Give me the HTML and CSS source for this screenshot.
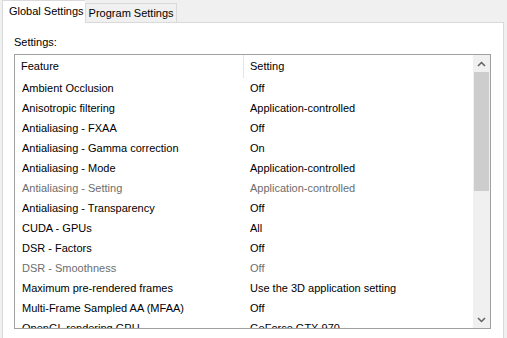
FILE: index.html
```html
<!DOCTYPE html>
<html lang="en">
<head>
    <meta charset="UTF-8">
    <title>Manage 3D Settings</title>
    <link rel="stylesheet" href="styles.css">
</head>
<body>

    <div class="tabs">
        <div class="tab active">Global Settings</div>
        <div class="tab">Program Settings</div>
    </div>

    <div class="panel">
        <div class="label">Settings:</div>

        <div class="listbox">
            <div class="list">
                <div class="header">
                    <div class="col feature">Feature</div>
                    <div class="col setting">Setting</div>
                </div>
                <div class="rows">
                    <div class="row"><span class="feature">Ambient Occlusion</span><span class="setting">Off</span></div>
                    <div class="row"><span class="feature">Anisotropic filtering</span><span class="setting">Application-controlled</span></div>
                    <div class="row"><span class="feature">Antialiasing - FXAA</span><span class="setting">Off</span></div>
                    <div class="row"><span class="feature">Antialiasing - Gamma correction</span><span class="setting">On</span></div>
                    <div class="row"><span class="feature">Antialiasing - Mode</span><span class="setting">Application-controlled</span></div>
                    <div class="row disabled"><span class="feature">Antialiasing - Setting</span><span class="setting">Application-controlled</span></div>
                    <div class="row"><span class="feature">Antialiasing - Transparency</span><span class="setting">Off</span></div>
                    <div class="row"><span class="feature">CUDA - GPUs</span><span class="setting">All</span></div>
                    <div class="row"><span class="feature">DSR - Factors</span><span class="setting">Off</span></div>
                    <div class="row disabled"><span class="feature">DSR - Smoothness</span><span class="setting">Off</span></div>
                    <div class="row"><span class="feature">Maximum pre-rendered frames</span><span class="setting">Use the 3D application setting</span></div>
                    <div class="row"><span class="feature">Multi-Frame Sampled AA (MFAA)</span><span class="setting">Off</span></div>
                    <div class="row"><span class="feature">OpenGL rendering GPU</span><span class="setting">GeForce GTX 970</span></div>
                </div>
            </div>

            <div class="scrollbar">
                <div class="arrow">
                    <svg width="9" height="6" viewBox="0 0 9 6"><path d="M1 5 L4.5 1.5 L8 5" fill="none" stroke="#606060" stroke-width="1.5"/></svg>
                </div>
                <div class="track">
                    <div class="thumb"></div>
                </div>
                <div class="arrow">
                    <svg width="9" height="6" viewBox="0 0 9 6"><path d="M1 1 L4.5 4.5 L8 1" fill="none" stroke="#606060" stroke-width="1.5"/></svg>
                </div>
            </div>
        </div>
    </div>

</body>
</html>
```

FILE: styles.css
```css
body {
    margin: 0;
    width: 507px;
    height: 338px;
    overflow: hidden;
    background: #f0f0f0;
    font-family: "Liberation Sans", Arial, sans-serif;
    font-size: 11px;
    color: #000;
}
.tabs {
    display: flex;
    align-items: flex-end;
    height: 22px;
    padding-left: 2px;
}
.tab {
    box-sizing: border-box;
    height: 19px;
    padding: 0 2px 0 3px;
    line-height: 19px;
    white-space: nowrap;
    border: 1px solid #d9d9d9;
    border-bottom: none;
    background: #f0f0f0;
}
.tab.active {
    height: 23px;
    margin-bottom: -1px;
    padding: 0 1px 0 6px;
    line-height: 20px;
    background: #fff;
    border-right: none;
    position: relative;
    z-index: 1;
}
.panel {
    box-sizing: border-box;
    margin-left: 2px;
    width: 502px;
    height: 316px;
    background: #fff;
    border: 1px solid #d9d9d9;
    border-bottom: none;
    padding: 9px 0 0 11px;
}
.label {
    line-height: 20px;
    margin-bottom: 2px;
}
.listbox {
    box-sizing: border-box;
    width: 477px;
    height: 275px;
    border: 1px solid #a0a0a0;
    display: flex;
}
.list {
    flex: 1;
    overflow: hidden;
}
.header {
    display: flex;
    height: 23px;
    line-height: 23px;
}
.header .col {
    padding-left: 6px;
}
.header .feature {
    width: 222px;
    border-right: 1px solid #e5e5e5;
}
.row {
    display: flex;
    height: 20px;
    line-height: 20px;
}
.row .feature {
    width: 221px;
    padding-left: 7px;
    white-space: nowrap;
}
.row .setting {
    padding-left: 7px;
    white-space: nowrap;
}
.row.disabled {
    color: #6d6d6d;
}
.scrollbar {
    width: 17px;
    display: flex;
    flex-direction: column;
    background: #f0f0f0;
}
.arrow {
    height: 17px;
    display: flex;
    align-items: center;
    justify-content: center;
}
.track {
    flex: 1;
}
.thumb {
    margin: 0 1px;
    height: 119px;
    background: #cdcdcd;
}
```
